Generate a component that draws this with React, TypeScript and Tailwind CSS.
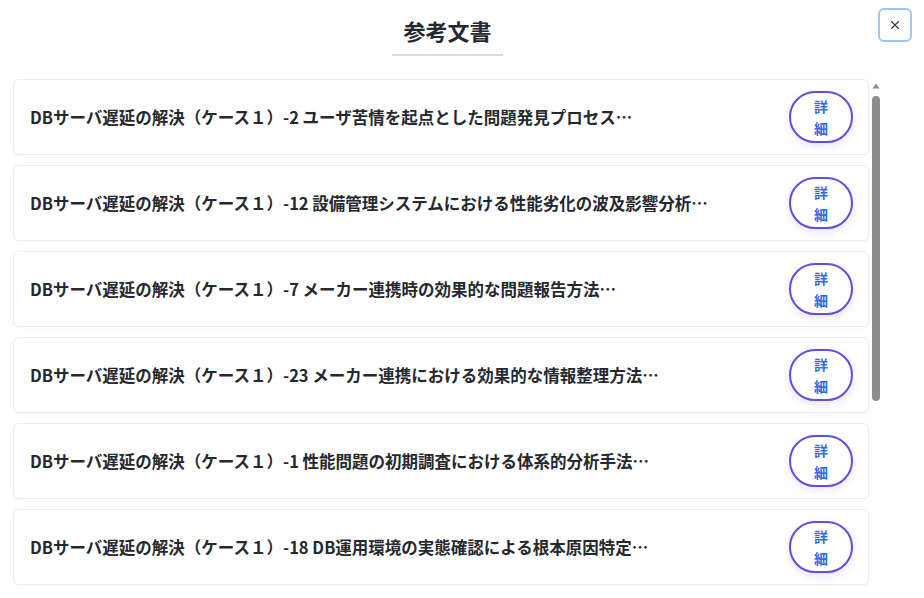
import { X } from "lucide-react";

const docs = [
  "DBサーバ遅延の解決（ケース１）-2 ユーザ苦情を起点とした問題発見プロセス…",
  "DBサーバ遅延の解決（ケース１）-12 設備管理システムにおける性能劣化の波及影響分析…",
  "DBサーバ遅延の解決（ケース１）-7 メーカー連携時の効果的な問題報告方法…",
  "DBサーバ遅延の解決（ケース１）-23 メーカー連携における効果的な情報整理方法…",
  "DBサーバ遅延の解決（ケース１）-1 性能問題の初期調査における体系的分析手法…",
  "DBサーバ遅延の解決（ケース１）-18 DB運用環境の実態確認による根本原因特定…",
];

function DocRow({ title }: { title: string }) {
  return (
    <div className="flex h-[76px] shrink-0 items-center justify-between rounded-[6px] border border-[#ececf0] bg-white pl-[16px] pr-[15px] shadow-[0_1px_3px_rgba(0,0,0,0.04)]">
      <p className="truncate text-[16.5px] font-bold text-[#25282e]">{title}</p>
      <button className="ml-4 flex h-[52px] w-[64px] shrink-0 flex-col items-center justify-center rounded-full border-2 border-[#5b50e0] bg-white text-[14px] font-bold leading-[22px] text-[#2f6be8] shadow-[0_3px_8px_rgba(91,80,224,0.14)]">
        <span>詳</span>
        <span>細</span>
      </button>
    </div>
  );
}

function Scrollbar() {
  return (
    <div className="flex w-[12px] shrink-0 flex-col items-center pt-[4px]">
      <svg width="8" height="6" viewBox="0 0 8 6">
        <path d="M4 0.5 L7.5 5.5 L0.5 5.5 Z" fill="#8a8a8a" />
      </svg>
      <div className="mt-[7px] h-[305px] w-[8px] rounded-full bg-[#8c8c8c]" />
    </div>
  );
}

export default function App() {
  return (
    <div className="relative h-[598px] w-full overflow-hidden bg-white font-['Noto_Sans_CJK_JP','Noto_Sans',sans-serif]">
      <button className="absolute right-[12px] top-[8px] flex h-[34px] w-[34px] items-center justify-center rounded-[6px] border-2 border-[#9cc8f5] bg-white text-[#3a3a3a]">
        <X size={14} strokeWidth={2} />
      </button>

      <div className="ml-[13px] w-[869px]">
        <div className="flex justify-center pt-[15px]">
          <h2 className="border-b-2 border-[#d9dbe0] px-[11px] pb-[8px] text-[22px] font-bold leading-[31px] text-[#25282e]">
            参考文書
          </h2>
        </div>

        <div className="mt-[23px] flex h-[512px]">
          <div className="flex flex-1 flex-col gap-[10px] pr-[1px]">
            {docs.map((d, i) => (
              <DocRow key={i} title={d} />
            ))}
          </div>
          <Scrollbar />
        </div>
      </div>
    </div>
  );
}
